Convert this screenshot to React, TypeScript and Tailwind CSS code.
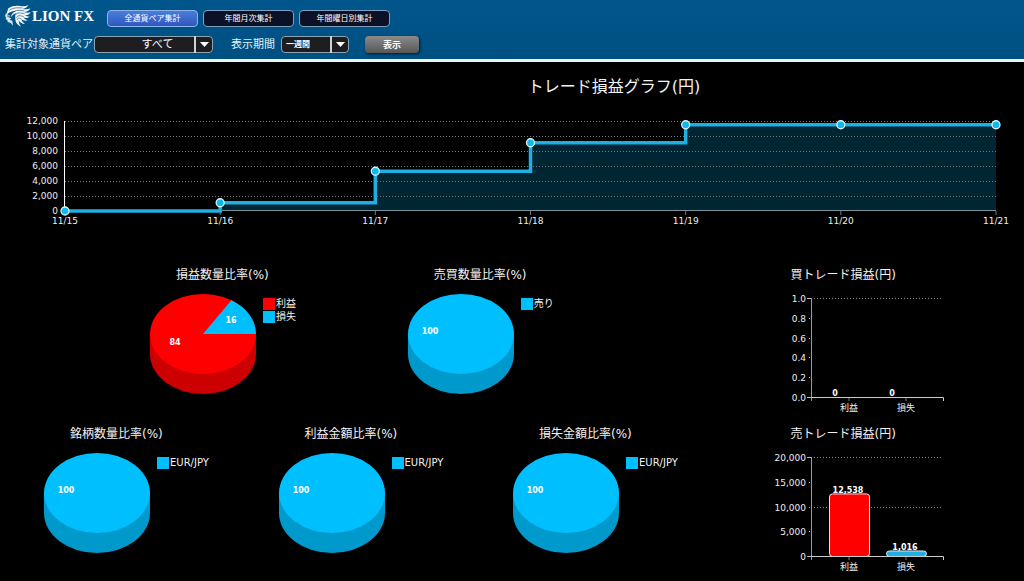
import { type ReactNode } from 'react';

const BLUE = '#00bfff';
const BLUE_SIDE = '#0099cc';
const RED = '#ff0000';
const RED_SIDE = '#cc0000';

interface PieItem {
  label: string;
  value: number;
  color: string;
  side: string;
}

interface BarItem {
  label: string;
  value: number;
  color: string;
}

const dailyTotals = [
  { date: '11/15', total: 0 },
  { date: '11/16', total: 1100 },
  { date: '11/17', total: 5300 },
  { date: '11/18', total: 9100 },
  { date: '11/19', total: 11500 },
  { date: '11/20', total: 11500 },
  { date: '11/21', total: 11500 },
];

const profitCount: PieItem[] = [
  { label: '利益', value: 84, color: RED, side: RED_SIDE },
  { label: '損失', value: 16, color: BLUE, side: BLUE_SIDE },
];
const sellCount: PieItem[] = [{ label: '売り', value: 100, color: BLUE, side: BLUE_SIDE }];
const eurJpy: PieItem[] = [{ label: 'EUR/JPY', value: 100, color: BLUE, side: BLUE_SIDE }];

function LionLogo() {
  return (
    <div className="flex items-center gap-px">
      <svg className="h-[22px] w-[26px]" viewBox="0 0 78 66" aria-hidden="true">
        <path
          fill="#f4f9fc"
          d="M10 10 C20 2 36 1 46 3 C54 5 62 4 70 1 C66 8 60 11 52 12 C62 14 70 13 76 10 C73 17 66 21 57 21 C64 24 71 24 77 22 C73 29 66 32 58 30 C64 34 69 35 74 35 C68 40 61 40 55 37 C59 42 64 45 69 46 C62 49 54 47 49 43 C51 49 55 54 60 57 C51 57 44 52 41 46 C41 53 44 60 48 65 C37 61 31 52 31 43 C31 34 29 29 34 24 C26 26 21 31 18 37 C18 29 24 21 33 17 C25 17 16 20 10 25 L4 30 L7 19 Z"
        />
        <path
          fill="#d3e4ef"
          d="M3 24 L0 33 L3 37 L2 43 L7 45 L8 51 L17 54 L24 62 L22 47 L14 44 L19 40 L9 36 L17 33 L8 29 Z"
        />
        <path
          fill="none"
          stroke="#17486f"
          strokeWidth="2"
          d="M13 16 C26 7 38 8 52 9 M22 24 C32 14 45 15 58 18 M30 31 C37 21 47 23 59 27 M34 38 C39 29 47 32 56 35 M36 45 C39 36 45 39 49 43 M6 33 L13 34"
        />
      </svg>
      <span className="font-['Liberation_Serif',serif] text-[15px] leading-5 font-bold whitespace-nowrap text-white">
        LION FX
      </span>
    </div>
  );
}

function TabButton({ active = false, children }: { active?: boolean; children: ReactNode }) {
  const base =
    'flex h-[17px] w-[91px] items-center justify-center rounded border text-[8px] leading-3 whitespace-nowrap text-white';
  return (
    <button
      type="button"
      className={
        active
          ? `${base} border-[#8fb4ec] bg-linear-to-b from-[#4a7ddb] to-[#2f58bd]`
          : `${base} border-[#7f9fbd] bg-[#0b1228]`
      }
    >
      {children}
    </button>
  );
}

function Arrow() {
  return (
    <span className="pointer-events-none absolute inset-y-0 right-0 flex w-[19px] items-center justify-center border-l-2 border-[#c9d3da]">
      <svg className="h-[5px] w-[9px]" viewBox="0 0 10 6" preserveAspectRatio="none" aria-hidden="true">
        <path d="M0 0 H10 L5 6 Z" fill="#fff" />
      </svg>
    </span>
  );
}

function Header() {
  return (
    <header className="flex flex-col gap-[9px] border-b-3 border-[#e9f5f9] bg-linear-to-b from-[#00568c] to-[#005082] px-[5px] pt-[5px] pb-1.5">
      <div className="flex items-end gap-[13px]">
        <LionLogo />
        <nav className="flex gap-[5px]">
          <TabButton active>全通貨ペア集計</TabButton>
          <TabButton>年間月次集計</TabButton>
          <TabButton>年間曜日別集計</TabButton>
        </nav>
      </div>
      <div className="flex h-[17px] items-center text-[11px] leading-4 whitespace-nowrap text-[#e3f1f8]">
        <label htmlFor="pair" className="w-[89px]">
          集計対象通貨ペア
        </label>
        <div className="relative">
          <select
            id="pair"
            className="block h-[17px] w-[119px] appearance-none rounded border border-[#8ba4b3] bg-[#1e1e20] pr-5 pl-7 text-center text-[11px] leading-3 text-white [text-align-last:center]"
          >
            <option>すべて</option>
          </select>
          <Arrow />
        </div>
        <label htmlFor="period" className="ml-[18px] w-[50px]">
          表示期間
        </label>
        <div className="relative">
          <select
            id="period"
            className="block h-[17px] w-[68px] appearance-none rounded-sm border border-[#8ba4b3] bg-[#1e1e20] pr-5 pl-1 text-[8px] leading-3 font-bold text-white"
          >
            <option>一週間</option>
          </select>
          <Arrow />
        </div>
        <button
          type="button"
          className="ml-4 h-[17px] w-[54px] rounded-sm bg-linear-to-b from-[#8b8b8b] to-[#575757] text-[9px] leading-3 font-bold text-white shadow-[1px_1px_3px_#00182b]"
        >
          表示
        </button>
      </div>
    </header>
  );
}

function ProfitChart() {
  const left = 65;
  const right = 996;
  const bottom = 99;
  const step = (right - left) / (dailyTotals.length - 1);
  const y = (v: number) => bottom - (v * 90) / 12000;
  const points = dailyTotals.map((d, i) => ({ ...d, x: left + i * step, y: y(d.total) }));
  const line = points.map((p, i) => (i === 0 ? `M${p.x} ${p.y}` : `H${p.x} V${p.y}`)).join(' ');

  return (
    <section className="pt-[13px]">
      <h1 className="pl-51 text-center text-base leading-6">トレード損益グラフ(円)</h1>
      <svg className="mt-[13px] h-auto w-full" viewBox="0 0 1024 120" role="img" aria-label="トレード損益グラフ">
        <path d={`${line} V${bottom} H${left} Z`} fill="#002533" />
        {[2000, 4000, 6000, 8000, 10000, 12000].map((v) => (
          <line
            key={v}
            x1={left}
            x2={right}
            y1={Math.round(y(v)) + 0.5}
            y2={Math.round(y(v)) + 0.5}
            stroke="#777"
            strokeDasharray="1 2"
          />
        ))}
        {[0, 2000, 4000, 6000, 8000, 10000, 12000].map((v) => (
          <text key={v} x="58" y={y(v) + 3} textAnchor="end" fontSize="9" fill="#eee">
            {v.toLocaleString('en-US')}
          </text>
        ))}
        <path d={`M${left - 0.5} 9 V${bottom}`} stroke="#fff" />
        <path d={`M${left} ${bottom - 0.5} H${right}`} stroke="#7d9299" />
        {points.map((p) => (
          <g key={p.date}>
            <path d={`M${p.x} ${bottom} v4`} stroke="#777" />
            <text x={p.x} y="112" textAnchor="middle" fontSize="9" fill="#eee">
              {p.date}
            </text>
          </g>
        ))}
        <path d={line} fill="none" stroke="#1eb0e3" strokeWidth="3.5" />
        {points.map((p) => (
          <circle key={p.date} cx={p.x} cy={p.y} r="4" fill="#10b8ee" stroke="#d8f4fd" strokeWidth="1.3" />
        ))}
      </svg>
    </section>
  );
}

function PieChart({ title, items }: { title: string; items: PieItem[] }) {
  const cx = 53;
  const cy = 40;
  const rx = 53;
  const ry = 40;
  const main = items[0];
  const other = items[1];
  const angle = other ? (other.value / 100) * 2 * Math.PI : 0;

  return (
    <section>
      <h2 className="pl-[26px] text-xs leading-[18px] whitespace-nowrap">{title}</h2>
      <div className="mt-2.5 flex gap-[7px]">
        <svg className="h-[100px] w-[106px] shrink-0" viewBox="0 0 106 100" role="img" aria-label={title}>
          <path d="M0 40 V60 A53 40 0 0 0 106 60 V40 Z" fill={main.side} />
          <ellipse cx={cx} cy={cy} rx={rx} ry={ry} fill={main.color} />
          {other && (
            <path
              d={`M${cx} ${cy} L${cx + rx * Math.cos(angle)} ${cy - ry * Math.sin(angle)} A${rx} ${ry} 0 0 1 ${cx + rx} ${cy} Z`}
              fill={other.color}
            />
          )}
          <g fill="#fff" fontSize="8" fontWeight="bold" textAnchor="middle">
            <text x={other ? 25 : 22} y={other ? 51 : 40}>
              {main.value}
            </text>
            {other && (
              <text x="81" y="29">
                {other.value}
              </text>
            )}
          </g>
        </svg>
        <ul className="mt-1 flex flex-col gap-px text-[10px] leading-3 whitespace-nowrap">
          {items.map((item) => (
            <li key={item.label} className="flex items-center gap-px">
              <span className="size-3" style={{ backgroundColor: item.color }}></span>
              <span>{item.label}</span>
            </li>
          ))}
        </ul>
      </div>
    </section>
  );
}

interface BarChartProps {
  title: string;
  ticks: number[];
  grid: number[];
  digits: number;
  items: BarItem[];
}

function BarChart({ title, ticks, grid, digits, items }: BarChartProps) {
  const max = ticks[ticks.length - 1];
  const y = (v: number) => 105 - (v * 99) / max;
  const format = (v: number) =>
    v.toLocaleString('en-US', { minimumFractionDigits: digits, maximumFractionDigits: digits });

  return (
    <section className="pl-[15px]">
      <h2 className="pl-7 text-xs leading-[18px] whitespace-nowrap">{title}</h2>
      <svg className="mt-2 h-[122px] w-[190px]" viewBox="0 0 190 122" role="img" aria-label={title}>
        {grid.map((v) => (
          <path key={v} d={`M48 ${Math.round(y(v)) + 0.5} H180`} stroke="#888" strokeDasharray="1 2" />
        ))}
        {ticks.map((v) => (
          <g key={v}>
            <path
              d={`M${v === 0 || v === max ? 44 : 46} ${Math.round(y(v)) + 0.5} H${v === 0 || v === max ? 48 : 47}`}
              stroke="#bbb"
            />
            <text x="43" y={y(v) + 4} textAnchor="end" fontSize="9" fill="#eee">
              {format(v)}
            </text>
          </g>
        ))}
        <path d="M48.5 6 V109" stroke="#999" />
        {items.map((item, i) => {
          const center = 86 + i * 57;
          return (
            <g key={item.label}>
              {item.value > 0 && (
                <rect
                  x={center - 19.5}
                  y={y(item.value)}
                  width="40"
                  height={105.5 - y(item.value)}
                  rx="3"
                  fill={item.color}
                  stroke="#d9eef5"
                />
              )}
              <text
                x={item.value > 0 ? center - 1 : center - 14}
                y={y(item.value) - 1}
                textAnchor="middle"
                fontSize="8"
                fontWeight="bold"
                fill="#fff"
              >
                {item.value.toLocaleString('en-US')}
              </text>
              <path d={`M${center} 106 v3`} stroke="#777" />
              <text x={center} y="119" textAnchor="middle" fontSize="9" fill="#eee">
                {item.label}
              </text>
            </g>
          );
        })}
        <path d="M48 105.5 H180.5 V109" fill="none" stroke="#ccc" />
      </svg>
    </section>
  );
}

function App() {
  return (
    <div className="min-h-screen bg-black font-['DejaVu_Sans','Noto_Sans_CJK_JP',sans-serif] text-[#f2f2f2]">
      <Header />
      <main>
        <ProfitChart />
        <div className="mt-[34px] grid grid-cols-[73%_27%]">
          <div className="grid h-[159px] grid-cols-2 pr-[82px] pl-[150px]">
            <PieChart title="損益数量比率(%)" items={profitCount} />
            <PieChart title="売買数量比率(%)" items={sellCount} />
          </div>
          <BarChart
            title="買トレード損益(円)"
            ticks={[0, 0.2, 0.4, 0.6, 0.8, 1]}
            grid={[1]}
            digits={1}
            items={[
              { label: '利益', value: 0, color: RED },
              { label: '損失', value: 0, color: '#1eb0e3' },
            ]}
          />
          <div className="grid grid-cols-3 pl-11">
            <PieChart title="銘柄数量比率(%)" items={eurJpy} />
            <PieChart title="利益金額比率(%)" items={eurJpy} />
            <PieChart title="損失金額比率(%)" items={eurJpy} />
          </div>
          <BarChart
            title="売トレード損益(円)"
            ticks={[0, 5000, 10000, 15000, 20000]}
            grid={[10000, 20000]}
            digits={0}
            items={[
              { label: '利益', value: 12538, color: RED },
              { label: '損失', value: 1016, color: '#1eb0e3' },
            ]}
          />
        </div>
      </main>
    </div>
  );
}

export default App;
